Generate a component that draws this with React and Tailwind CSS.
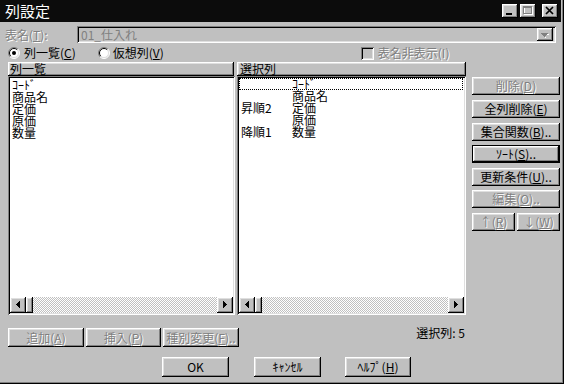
import React from "react";

const RAISED =
  "bg-[#c0c0c0] shadow-[inset_-1px_-1px_0_#000,inset_1px_1px_0_#fff,inset_-2px_-2px_0_#808080,inset_2px_2px_0_#dfdfdf]";
const DEFAULT_BTN =
  "bg-[#c0c0c0] shadow-[inset_0_0_0_1px_#000,inset_-2px_-2px_0_#000,inset_2px_2px_0_#fff,inset_-3px_-3px_0_#808080,inset_3px_3px_0_#dfdfdf]";
const SUNKEN =
  "shadow-[inset_1px_1px_0_#808080,inset_-1px_-1px_0_#fff,inset_2px_2px_0_#000,inset_-2px_-2px_0_#dfdfdf]";
const DIS = "text-[#808080] [text-shadow:1px_1px_0_#fff]";

function U({ children }) {
  return <span className="underline underline-offset-1">{children}</span>;
}

function Btn({ className = "", disabled, def, children }) {
  return (
    <div
      className={`${def ? DEFAULT_BTN : RAISED} flex items-center justify-center text-[12px] leading-[12px] whitespace-nowrap ${
        disabled ? DIS : "text-black"
      } ${className}`}
    >
      {children}
    </div>
  );
}

function ArrowLeft() {
  return (
    <svg width="16" height="16" viewBox="0 0 16 16">
      <rect x="6" y="7" width="1" height="1" fill="#000" />
      <rect x="7" y="6" width="1" height="3" fill="#000" />
      <rect x="8" y="5" width="1" height="5" fill="#000" />
      <rect x="9" y="4" width="1" height="7" fill="#000" />
    </svg>
  );
}
function ArrowRight() {
  return (
    <svg width="16" height="16" viewBox="0 0 16 16">
      <rect x="6" y="4" width="1" height="7" fill="#000" />
      <rect x="7" y="5" width="1" height="5" fill="#000" />
      <rect x="8" y="6" width="1" height="3" fill="#000" />
      <rect x="9" y="7" width="1" height="1" fill="#000" />
    </svg>
  );
}

function HScroll() {
  return (
    <div className="flex h-[16px] shrink-0">
      <div className={`${RAISED} w-[16px] h-[16px] shrink-0`}>
        <ArrowLeft />
      </div>
      <div className={`${RAISED} w-[7px] h-[16px] shrink-0`} />
      <div className="flex-1 h-[16px] bg-[image:repeating-conic-gradient(#c0c0c0_0%_25%,#ffffff_0%_50%)] bg-[length:2px_2px]" />
      <div className={`${RAISED} w-[16px] h-[16px] shrink-0`}>
        <ArrowRight />
      </div>
    </div>
  );
}

function Radio({ checked }) {
  return (
    <svg width="12" height="12" viewBox="0 0 12 12" className="shrink-0">
      <circle cx="6" cy="6" r="5" fill="#fff" />
      <path d="M2.1 9.9 A5.5 5.5 0 0 1 9.9 2.1" stroke="#808080" strokeWidth="1" fill="none" />
      <path d="M2.8 9.2 A4.5 4.5 0 0 1 9.2 2.8" stroke="#000" strokeWidth="1" fill="none" />
      <path d="M9.9 2.1 A5.5 5.5 0 0 1 2.1 9.9" stroke="#fff" strokeWidth="1" fill="none" />
      <path d="M9.2 2.8 A4.5 4.5 0 0 1 2.8 9.2" stroke="#dfdfdf" strokeWidth="1" fill="none" />
      {checked && <circle cx="6" cy="6" r="2" fill="#000" />}
    </svg>
  );
}

const leftItems = ["ｺｰﾄﾞ", "商品名", "定価", "原価", "数量"];
const rightItems = [
  ["", "ｺｰﾄﾞ"],
  ["", "商品名"],
  ["昇順2", "定価"],
  ["", "原価"],
  ["降順1", "数量"],
];

export default function App() {
  return (
    <div className="w-[567px] h-[386px] bg-white font-['Noto_Sans_CJK_JP','Noto_Sans',sans-serif] text-[12px] leading-[12px] text-black">
      <div className="relative w-[564px] h-[384px] bg-[#c0c0c0] shadow-[inset_-1px_-1px_0_#000,inset_-2px_-2px_0_#808080] flex flex-col">
        {/* title bar */}
        <div className="w-[561px] h-[22px] bg-[#0c0c0c] flex items-center pl-[5px] shrink-0">
          <span className="text-white text-[15px] leading-[16px]">列設定</span>
          <div className="ml-auto flex items-center">
            <div className={`${RAISED} w-[16px] h-[14px]`}>
              <svg width="16" height="14" viewBox="0 0 16 14">
                <rect x="4" y="9" width="6" height="2" fill="#000" />
              </svg>
            </div>
            <div className={`${RAISED} w-[16px] h-[14px] ml-[2px]`}>
              <svg width="16" height="14" viewBox="0 0 16 14">
                <rect x="4.5" y="3.5" width="8" height="7" stroke="#fff" fill="none" />
                <rect x="4" y="3" width="8" height="1" fill="#fff" />
                <rect x="3.5" y="2.5" width="8" height="7" stroke="#808080" fill="none" />
                <rect x="3" y="2" width="9" height="2" fill="#808080" />
              </svg>
            </div>
            <div className={`${RAISED} w-[16px] h-[14px] ml-[6px] mr-[3px]`}>
              <svg width="16" height="14" viewBox="0 0 16 14">
                <path d="M4 3 L11 10 M11 3 L4 10" stroke="#000" strokeWidth="1.7" fill="none" />
              </svg>
            </div>
          </div>
        </div>

        {/* table name row */}
        <div className="flex items-center h-[17px] mt-[4px] shrink-0">
          <div className={`w-[77px] pl-[5px] ${DIS}`}>
            表名(<U>T</U>):
          </div>
          <div className={`${SUNKEN} w-[479px] h-[17px] flex items-center pl-[4px]`}>
            <span className="text-[#808080]">01_仕入れ</span>
            <div className={`${RAISED} ml-auto mr-[3px] w-[16px] h-[13px]`}>
              <svg width="16" height="13" viewBox="0 0 16 13">
                <rect x="5" y="6" width="7" height="1" fill="#fff" />
                <rect x="8" y="9" width="1" height="1" fill="#fff" />
                <rect x="4" y="5" width="7" height="1" fill="#808080" />
                <rect x="5" y="6" width="5" height="1" fill="#808080" />
                <rect x="6" y="7" width="3" height="1" fill="#808080" />
                <rect x="7" y="8" width="1" height="1" fill="#808080" />
              </svg>
            </div>
          </div>
        </div>

        {/* radio row */}
        <div className="flex items-center h-[14px] mt-[3px] pl-[8px] shrink-0">
          <Radio checked />
          <span className="ml-[4px]">
            列一覧(<U>C</U>)
          </span>
          <div className="ml-[22px]">
            <Radio />
          </div>
          <span className="ml-[3px]">
            仮想列(<U>V</U>)
          </span>
          <div className={`${SUNKEN} ml-[197px] w-[13px] h-[13px] bg-[#c0c0c0]`} />
          <span className={`ml-[4px] ${DIS}`}>表名非表示(I)</span>
        </div>

        {/* main area */}
        <div className="flex mt-[2px] pl-[8px] shrink-0">
          <div className="w-[458px] flex flex-col">
            <div className="flex gap-[3px] h-[14px]">
              <div className={`${RAISED} w-[226px] h-[14px] pl-[2px] flex items-center`}>列一覧</div>
              <div className={`${RAISED} w-[229px] h-[14px] pl-[3px] flex items-center`}>選択列</div>
            </div>
            <div className="flex gap-[2px] h-[239px]">
              <div className={`${SUNKEN} bg-white w-[227px] h-[239px] p-[2px] flex flex-col`}>
                <div className="flex-1 pl-[2px] pt-[1px]">
                  {leftItems.map((t) => (
                    <div key={t} className="h-[12px] leading-[12px]">
                      {t}
                    </div>
                  ))}
                </div>
                <HScroll />
              </div>
              <div className={`${SUNKEN} bg-white w-[229px] h-[239px] p-[2px] flex flex-col`}>
                <div className="flex-1">
                  {rightItems.map(([s, t], i) => (
                    <div
                      key={t}
                      className={`flex h-[12px] leading-[12px] ${
                        i === 0 ? "w-[224px] outline-1 outline-dotted outline-black -outline-offset-1" : ""
                      }`}
                    >
                      <div className="w-[53px] pl-[2px]">{s}</div>
                      <div>{t}</div>
                    </div>
                  ))}
                </div>
                <HScroll />
              </div>
            </div>
            <div className="flex items-start mt-[13px] h-[19px]">
              <Btn disabled className="w-[76px] h-[19px]">
                追加(<U>A</U>)
              </Btn>
              <Btn disabled className="w-[75px] h-[19px] ml-[2px]">
                挿入(<U>P</U>)
              </Btn>
              <Btn disabled className="w-[76px] h-[19px] ml-[2px]">
                種別変更(<U>F</U>)..
              </Btn>
              <div className="ml-auto mt-[-1px] pr-[1px]">選択列: 5</div>
            </div>
          </div>

          <div className="ml-[6px] w-[88px] flex flex-col pt-[15px]">
            <Btn disabled className="h-[18px]">
              削除(<U>D</U>)
            </Btn>
            <Btn className="h-[18px] mt-[5px]">
              全列削除(<U>E</U>)
            </Btn>
            <Btn className="h-[18px] mt-[5px]">
              集合関数(<U>B</U>)..
            </Btn>
            <Btn def className="h-[18px] mt-[4px]">
              ｿｰﾄ(<U>S</U>)..
            </Btn>
            <Btn className="h-[18px] mt-[5px]">
              更新条件(<U>U</U>)..
            </Btn>
            <Btn disabled className="h-[18px] mt-[4px]">
              編集(<U>O</U>)..
            </Btn>
            <div className="flex gap-[2px] mt-[5px]">
              <Btn disabled className="w-[43px] h-[18px]">
                ↑(<U>R</U>)
              </Btn>
              <Btn disabled className="w-[43px] h-[18px]">
                ↓(<U>W</U>)
              </Btn>
            </div>
          </div>
        </div>

        {/* OK row */}
        <div className="flex mt-[10px] pl-[162px] shrink-0">
          <Btn className="w-[67px] h-[20px]">OK</Btn>
          <Btn className="w-[67px] h-[20px] ml-[25px]">ｷｬﾝｾﾙ</Btn>
          <Btn className="w-[66px] h-[20px] ml-[24px]">
            ﾍﾙﾌﾟ(<U>H</U>)
          </Btn>
        </div>
      </div>
    </div>
  );
}
